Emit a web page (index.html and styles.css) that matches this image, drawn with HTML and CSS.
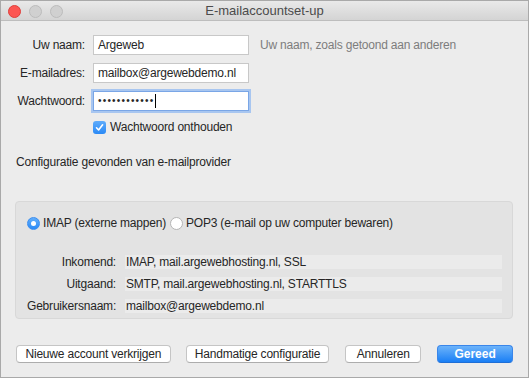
FILE: index.html
```html
<!DOCTYPE html>
<html lang="nl">
<head>
    <meta charset="UTF-8">
    <title>E-mailaccountset-up</title>
    <link rel="stylesheet" href="styles.css">
</head>
<body>
    <div class="window">
        <div class="titlebar">
            <div class="lights">
                <span class="light red"></span>
                <span class="light"></span>
                <span class="light"></span>
            </div>
            <div class="title">E-mailaccountset-up</div>
        </div>

        <div class="form">
            <label class="label">Uw naam:</label>
            <div class="input">Argeweb</div>
            <div class="hint">Uw naam, zoals getoond aan anderen</div>

            <label class="label">E-mailadres:</label>
            <div class="input">mailbox@argewebdemo.nl</div>
            <div></div>

            <label class="label">Wachtwoord:</label>
            <div class="input focused"><span class="dots">••••••••••••</span><span class="caret"></span></div>
            <div></div>

            <div></div>
            <div class="check">
                <span class="checkbox">
                    <svg width="9" height="9" viewBox="0 0 9 9"><path d="M1.5 4.8 L3.6 7 L7.6 1.8" fill="none" stroke="#fff" stroke-width="1.6" stroke-linecap="round" stroke-linejoin="round"/></svg>
                </span>
                Wachtwoord onthouden
            </div>
            <div></div>
        </div>

        <p class="found">Configuratie gevonden van e-mailprovider</p>

        <div class="group">
            <div class="radios">
                <span class="radio on"><span class="dot"></span></span>
                <span class="radio-label">IMAP (externe mappen)</span>
                <span class="radio"></span>
                <span class="radio-label">POP3 (e-mail op uw computer bewaren)</span>
            </div>
            <div class="details">
                <span class="dlabel">Inkomend:</span>
                <span class="value">IMAP, mail.argewebhosting.nl, SSL</span>
                <span class="dlabel">Uitgaand:</span>
                <span class="value">SMTP, mail.argewebhosting.nl, STARTTLS</span>
                <span class="dlabel">Gebruikersnaam:</span>
                <span class="value">mailbox@argewebdemo.nl</span>
            </div>
        </div>

        <div class="buttons">
            <button class="btn btn-new">Nieuwe account verkrijgen</button>
            <button class="btn btn-manual">Handmatige configuratie</button>
            <button class="btn btn-cancel">Annuleren</button>
            <button class="btn btn-primary">Gereed</button>
        </div>
    </div>
</body>
</html>
```

FILE: styles.css
```css
body {
    margin: 0;
    padding: 0;
    font-family: "Liberation Sans", Arial, sans-serif;
    font-size: 12px;
    letter-spacing: -0.2px;
    color: #262626;
}

.window {
    width: 529px;
    height: 378px;
    box-sizing: border-box;
    border: 1px solid #a9a9a9;
    background-color: #ececec;
}

/* Title bar */
.titlebar {
    position: relative;
    height: 19px;
    border-bottom: 1px solid #bdbdbd;
    background: linear-gradient(#e9e9e9, #d4d4d4);
    display: flex;
    align-items: center;
    justify-content: center;
}

.lights {
    position: absolute;
    left: 7px;
    top: 4px;
    display: flex;
    gap: 8px;
}

.light {
    width: 11px;
    height: 11px;
    border-radius: 50%;
    background-color: #d0d0d0;
    border: 0.5px solid #bcbcbc;
}

.light.red {
    background-color: #fc5652;
    border-color: #df3f3b;
}

.title {
    font-size: 13px;
    letter-spacing: 0;
    color: #4b4b4b;
}

/* Account form */
.form {
    display: grid;
    grid-template-columns: 69px 156px auto;
    column-gap: 8px;
    row-gap: 8px;
    padding: 14px 15px 0 15px;
    align-items: center;
}

.label {
    text-align: right;
    white-space: nowrap;
}

.input {
    height: 20px;
    box-sizing: border-box;
    background: #fff;
    border: 1px solid #c8c8c8;
    padding: 0 4px;
    line-height: 18px;
    display: flex;
    align-items: center;
}

.input.focused {
    border-color: #7aa6e6;
    box-shadow: 0 0 0 2px #a8c6f0;
}

.dots {
    font-size: 10px;
    letter-spacing: 1.2px;
}

.caret {
    display: inline-block;
    width: 1px;
    height: 14px;
    background: #000;
    margin-left: 1px;
}

.hint {
    color: #7d7d7d;
    padding-left: 3px;
}

.check {
    display: flex;
    align-items: center;
    gap: 4px;
    height: 14px;
    margin-top: 1px;
}

.checkbox {
    width: 13px;
    height: 13px;
    border-radius: 3px;
    background: linear-gradient(#5eabfb, #2a8af6);
    display: flex;
    align-items: center;
    justify-content: center;
}

.found {
    margin: 21px 0 0 15px;
}

/* Provider group */
.group {
    margin: 32px 15px 0 14px;
    background-color: #e3e3e3;
    border: 1px solid #d8d8d8;
    border-radius: 4px;
    padding: 14px 10px 5px 11px;
}

.radios {
    display: flex;
    align-items: center;
    height: 14px;
}

.radio {
    width: 13px;
    height: 13px;
    border-radius: 50%;
    background: #fff;
    border: 1px solid #b5b5b5;
    box-sizing: border-box;
    display: flex;
    align-items: center;
    justify-content: center;
    margin-right: 3px;
}

.radio.on {
    background: linear-gradient(#62aefb, #2a8af6);
    border-color: #3b8ef0;
}

.radio .dot {
    width: 5px;
    height: 5px;
    border-radius: 50%;
    background: #fff;
}

.radio-label {
    margin-right: 4px;
}

.details {
    display: grid;
    grid-template-columns: 89px 1fr;
    column-gap: 9px;
    row-gap: 8px;
    margin-top: 25px;
    align-items: center;
}

.dlabel {
    text-align: right;
    white-space: nowrap;
}

.value {
    height: 14px;
    line-height: 14px;
    background-color: #ebebeb;
    padding-left: 1px;
}

/* Buttons */
.buttons {
    display: flex;
    align-items: center;
    margin: 26px 15px 0 15px;
}

.btn {
    height: 18px;
    font-family: "Liberation Sans", Arial, sans-serif;
    font-size: 12px;
    letter-spacing: -0.2px;
    color: #262626;
    background: #fff;
    border: 1px solid #c5c5c5;
    border-bottom-color: #adadad;
    border-radius: 4px;
    padding: 0;
    box-sizing: border-box;
}

.btn-new {
    width: 155px;
}

.btn-manual {
    width: 144px;
    margin-left: 15px;
}

.btn-cancel {
    width: 76px;
    margin-left: 16px;
}

.btn-primary {
    width: 76px;
    margin-left: 16px;
    color: #fff;
    font-weight: bold;
    letter-spacing: 0;
    background: linear-gradient(#6cb3fa, #1a7ff5);
    border-color: #3a86ea;
    border-bottom-color: #1f6fd6;
}
```
